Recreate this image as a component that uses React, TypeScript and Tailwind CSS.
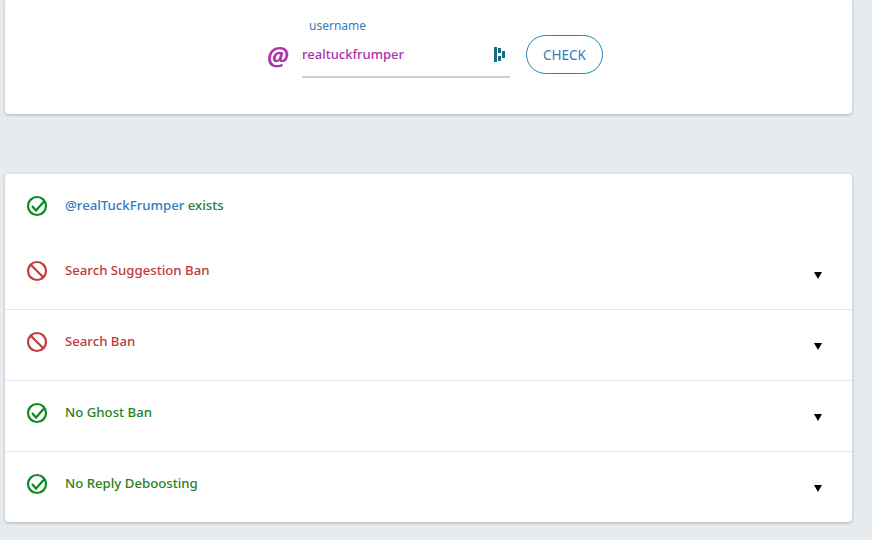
const rows = [
  { label: 'Search Suggestion Ban', ok: false },
  { label: 'Search Ban', ok: false },
  { label: 'No Ghost Ban', ok: true },
  { label: 'No Reply Deboosting', ok: true },
];

function StatusIcon({ ok }: { ok: boolean }) {
  if (ok) {
    return (
      <svg width="22" height="22" viewBox="0 0 22 22" fill="none" stroke="#0a8a1f" strokeWidth="2.2" className="shrink-0">
        <circle cx="11" cy="11" r="9" />
        <path d="M6 11l4 4.5 8-9" />
      </svg>
    );
  }
  return (
    <svg width="22" height="22" viewBox="0 0 22 22" fill="none" stroke="#c43c3f" strokeWidth="2.2" className="shrink-0">
      <circle cx="11" cy="11" r="9" />
      <path d="M4.8 4.8l12.4 12.4" />
    </svg>
  );
}

export default function App() {
  return (
    <div className="h-[540px] overflow-hidden bg-[#e6ebef] pl-[5px] pr-[20px] font-['Noto_Sans',sans-serif]">
      {/* Search form */}
      <div className="h-[114px] bg-white rounded-b-[4px] shadow-[0_1px_3px_rgba(0,0,0,0.25)] flex items-start pl-[262px] pt-[18px]">
        <span className="mt-[20px] w-[35px] text-[25px] leading-[34px] italic font-bold text-[#a935a8]">@</span>
        <div className="w-[208px] flex flex-col">
          <label className="pl-[7px] text-[12px] leading-[16px] text-[#3a78c2]">username</label>
          <div className="mt-[2px] h-[42px] border-b-2 border-[#c8d3df] flex items-center justify-between pr-[5px] pb-[4px]">
            <span className="mt-[2px] text-[13px] font-medium text-[#a935a8]">realtuckfrumper</span>
            <svg width="11" height="15" viewBox="0 0 11 15" fill="#156f82">
              <rect x="0" y="0" width="3" height="15" />
              <rect x="4" y="1" width="3" height="5" />
              <rect x="4" y="9" width="3" height="5" />
              <rect x="8" y="4" width="3" height="7" />
            </svg>
          </div>
        </div>
        <button className="ml-[16px] mt-[17px] w-[77px] h-[39px] pt-[1px] rounded-full border border-[#1f83bd] text-[13.5px] text-[#2a80b9]">CHECK</button>
      </div>

      {/* Results */}
      <div className="mt-[60px] bg-white rounded-[4px] shadow-[0_1px_3px_rgba(0,0,0,0.25)]">
        <div className="h-[64px] flex items-center pl-[21px] pb-[1px] gap-[17px]">
          <StatusIcon ok />
          <span className="text-[13.2px] font-medium text-[#2f7cc0]">
            @realTuckFrumper <span className="text-[#2b7d2b]">exists</span>
          </span>
        </div>
        {rows.map((r, i) => (
          <div key={r.label} className={`h-[71px] flex items-center pl-[21px] pr-[30px] pb-[6px] gap-[17px] ${i > 0 ? 'border-t border-[#e6e6ee]' : ''}`}>
            <StatusIcon ok={r.ok} />
            <span className={`flex-1 text-[13.2px] font-medium ${r.ok ? 'text-[#23821f]' : 'text-[#c0393c]'}`}>{r.label}</span>
            <svg width="8" height="7" viewBox="0 0 8 7" className={i === 0 ? 'mt-[9px]' : 'mt-[8px]'}><path d="M0 0h8L4 7z" fill="#000" /></svg>
          </div>
        ))}
      </div>
    </div>
  );
}
